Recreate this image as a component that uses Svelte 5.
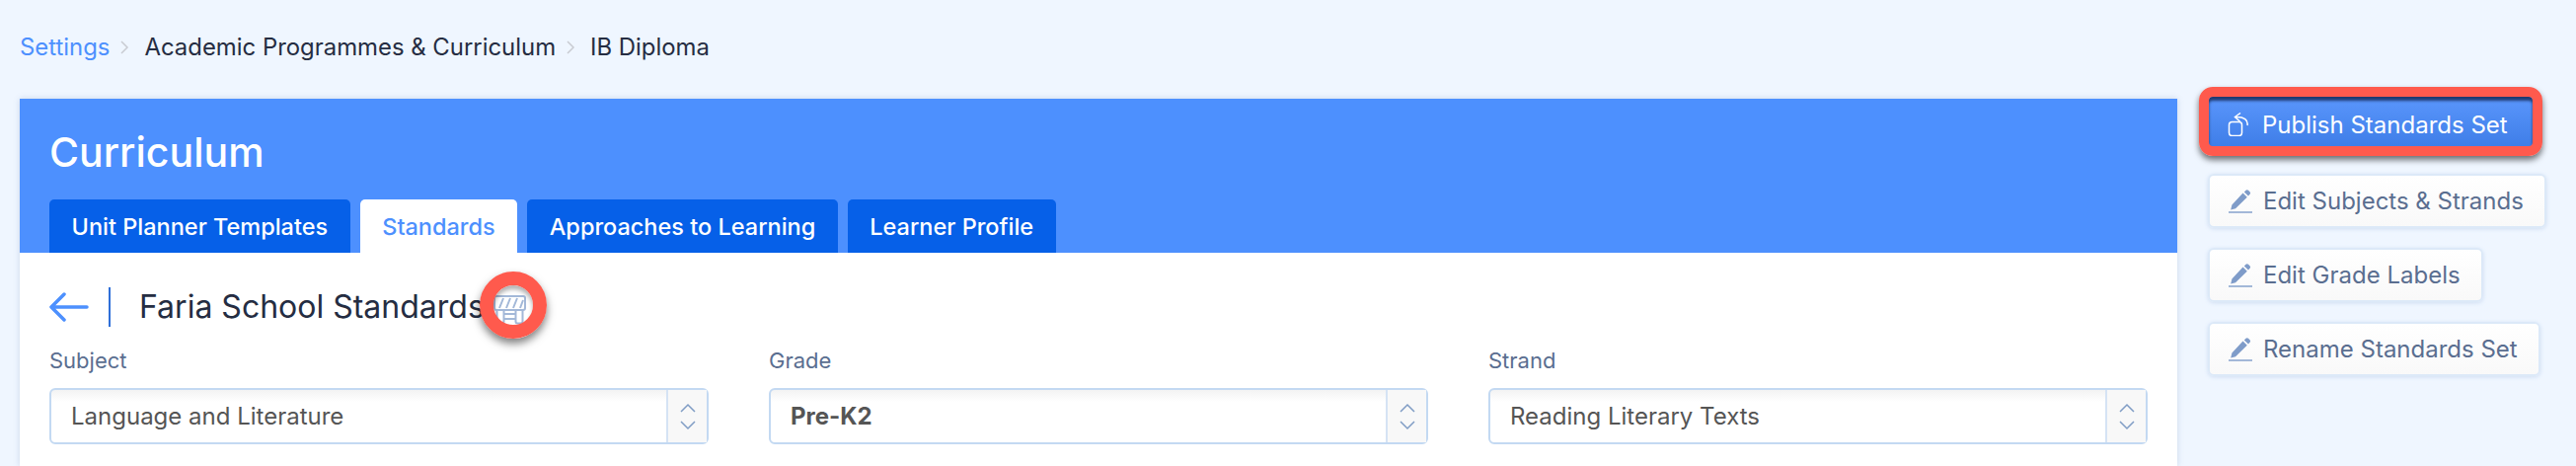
<script lang="ts">
  const tabs = [
    { label: 'Unit Planner Templates', active: false },
    { label: 'Standards', active: true },
    { label: 'Approaches to Learning', active: false },
    { label: 'Learner Profile', active: false }
  ];
  const selects = [
    { label: 'Subject', value: 'Language and Literature', bold: false },
    { label: 'Grade', value: 'Pre-K2', bold: true },
    { label: 'Strand', value: 'Reading Literary Texts', bold: false }
  ];
  const edits = ['Edit Subjects & Strands', 'Edit Grade Labels', 'Rename Standards Set'];
</script>

<div class="page">
  <nav class="crumbs">
    <span class="link">Settings</span>
    <svg class="sep" viewBox="0 0 10 16"><path d="M2 2l6 6-6 6" /></svg>
    <span>Academic Programmes &amp; Curriculum</span>
    <svg class="sep" viewBox="0 0 10 16"><path d="M2 2l6 6-6 6" /></svg>
    <span>IB Diploma</span>
  </nav>

  <div class="content">
    <main class="panel">
      <header class="panel-head">
        <h1>Curriculum</h1>
        <div class="tabs">
          {#each tabs as tab}
            <div class="tab" class:active={tab.active}>{tab.label}</div>
          {/each}
        </div>
      </header>

      <section class="panel-body">
        <div class="title-row">
          <svg class="back" viewBox="0 0 40 30">
            <path d="M38 15H3M15 2L2 15l13 13" />
          </svg>
          <div class="divider"></div>
          <h2>Faria School Standards</h2>
          <div class="market">
            <svg viewBox="0 0 33 30">
              <rect x="1" y="1" width="31" height="14" rx="2" />
              <path d="M6 13l4-10M13 13l4-10M20 13l4-10M27 13l3-8" />
              <path d="M3.500 15v11.500a2 2 0 0 0 2 2h3a2 2 0 0 0 2-2V15M22.500 15v11.500a2 2 0 0 0 2 2h3a2 2 0 0 0 2-2V15M10.500 19h12M10.500 24h12" />
            </svg>
            <div class="ring"></div>
          </div>
        </div>

        <div class="filters">
          {#each selects as sel}
            <div class="field">
              <div class="field-label">{sel.label}</div>
              <div class="select">
                <span class="value" class:bold={sel.bold}>{sel.value}</span>
                <div class="stepper">
                  <svg viewBox="0 0 16 28">
                    <path d="M1 9l7-7 7 7M1 19l7 7 7-7" />
                  </svg>
                </div>
              </div>
            </div>
          {/each}
        </div>
      </section>
    </main>

    <aside class="actions">
      <button class="btn primary">
        <svg class="btn-icon" viewBox="0 0 24 24">
          <rect x="2.500" y="9.500" width="13" height="14" rx="3" />
          <path d="M21 13c1-5-3-9-12-8.500M14 .500L8.500 4.500l5 4.500" />
        </svg>
        Publish Standards Set
      </button>
      {#each edits as label}
        <button class="btn">
          <svg class="btn-icon" viewBox="0 0 24 24">
            <path class="fill" d="M17.500.800a1.800 1.800 0 0 1 2.500 0l1.500 1.500a1.800 1.800 0 0 1 0 2.500L20 6.500 15.800 2.400zM14.500 3.600L18.800 7.800 7 19.200 2.200 20.500 3.400 15.500z" />
            <path class="line" d="M0 23h24" />
          </svg>
          {label}
        </button>
      {/each}
    </aside>
  </div>
</div>

<style>
  :global(body) {
    margin: 0;
    background: #eff6ff;
  }

  .page {
    height: 472px;
    overflow: hidden;
    font-family: Inter, "Liberation Sans", sans-serif;
    color: #252d42;
  }

  .crumbs {
    height: 100px;
    box-sizing: border-box;
    padding: 34px 0 0 20px;
    display: flex;
    align-items: flex-start;
    font-size: 23.900px;
    line-height: 28px;
  }

  .crumbs .link {
    color: #4d90fe;
  }

  .sep {
    width: 10px;
    height: 16px;
    margin: 6px 15px 0 10px;
    fill: none;
    stroke: #c9ccd2;
    stroke-width: 1.500;
  }

  .content {
    display: flex;
    align-items: flex-start;
    padding-left: 20px;
  }

  .panel {
    width: 2186px;
    height: 372px;
    flex: none;
    background: #fff;
    box-shadow: 0 0 6px rgba(90, 120, 170, 0.25);
  }

  .panel-head {
    height: 156px;
    box-sizing: border-box;
    padding: 30px 30px 0;
    background: #4d90fe;
  }

  h1 {
    margin: 0;
    height: 72px;
    font-size: 41px;
    line-height: 48px;
    font-weight: 500;
    color: #fff;
  }

  .tabs {
    display: flex;
    gap: 10px;
  }

  .tab {
    height: 54px;
    padding: 0 22.500px;
    display: flex;
    align-items: center;
    border-radius: 5px 5px 0 0;
    background: #0660e8;
    color: #fff;
    font-size: 23.500px;
    font-weight: 500;
  }

  .tab.active {
    background: #fff;
    color: #4d90fe;
  }

  .panel-body {
    padding: 30px 30px 0;
  }

  .title-row {
    height: 50px;
    display: flex;
    align-items: center;
  }

  .back {
    width: 40px;
    height: 30px;
    fill: none;
    stroke: #4d90fe;
    stroke-width: 3.500;
    stroke-linecap: round;
    stroke-linejoin: round;
  }

  .divider {
    width: 2px;
    height: 40px;
    margin: 0 29px 0 20px;
    background: #2f6fd8;
  }

  h2 {
    margin: 0;
    font-size: 32px;
    font-weight: 400;
    line-height: 40px;
    color: #252d42;
  }

  .market {
    position: relative;
    width: 33px;
    height: 30px;
    margin: 6px 0 0 9px;
  }

  .market svg {
    display: block;
    width: 33px;
    height: 30px;
    fill: none;
    stroke: #a3b8d8;
    stroke-width: 2;
    stroke-linejoin: round;
  }

  .ring {
    position: absolute;
    left: -14px;
    top: -24px;
    width: 68px;
    height: 68px;
    box-sizing: border-box;
    border: 14px solid #ff5a4d;
    border-radius: 50%;
    box-shadow: 0 5px 8px rgba(0, 0, 0, 0.5), inset 0 4px 4px rgba(0, 0, 0, 0.3);
  }

  .filters {
    margin-top: 15px;
    display: grid;
    grid-template-columns: repeat(3, 668px);
    column-gap: 61px;
  }

  .field-label {
    height: 42px;
    font-size: 22px;
    line-height: 28px;
    color: #5a6e90;
  }

  .select {
    height: 57px;
    box-sizing: border-box;
    display: flex;
    align-items: center;
    justify-content: space-between;
    border: 2px solid #c3d9f2;
    border-radius: 6px;
    background: linear-gradient(#f3f3f3, #fff 12px);
  }

  .value {
    padding-left: 20px;
    font-size: 24px;
    color: #555;
  }

  .value.bold {
    font-weight: 700;
  }

  .stepper {
    width: 41px;
    height: 100%;
    box-sizing: border-box;
    display: flex;
    align-items: center;
    justify-content: center;
    border-left: 2px solid #d5e3f4;
    background: #f8f8f8;
  }

  .stepper svg {
    width: 16px;
    height: 28px;
    fill: none;
    stroke: #7f9cc4;
    stroke-width: 1.500;
  }

  .actions {
    display: flex;
    flex-direction: column;
    align-items: flex-start;
    gap: 20px;
    margin-left: 31px;
  }

  .btn {
    height: 55px;
    padding: 0 21px 0 19px;
    display: flex;
    align-items: center;
    gap: 11px;
    box-sizing: border-box;
    font: 400 24px Inter, "Liberation Sans", sans-serif;
    color: #5a6e90;
    border: 2px solid #dce9f8;
    border-radius: 6px;
    background: linear-gradient(#fff, #f9f9f9);
    box-shadow: 0 1px 4px rgba(90, 130, 190, 0.2);
  }

  .btn.primary {
    height: 70px;
    margin: -12px 0 -2px -9px;
    padding: 6px 25px 0 18px;
    gap: 12px;
    border: 10px solid #ff5a4d;
    border-radius: 14px;
    color: #fff;
    background: linear-gradient(#5a96fc, #3f7ee8);
    box-shadow: 0 4px 6px rgba(0, 0, 0, 0.55), inset 0 4px 3px #1f3a70;
  }

  .btn-icon {
    width: 24px;
    height: 24px;
    flex: none;
  }

  .primary .btn-icon {
    fill: none;
    stroke: #fff;
    stroke-width: 1.500;
  }

  .fill {
    fill: #7f9cc9;
  }

  .line {
    stroke: #a3b8d8;
    stroke-width: 2;
  }
</style>
